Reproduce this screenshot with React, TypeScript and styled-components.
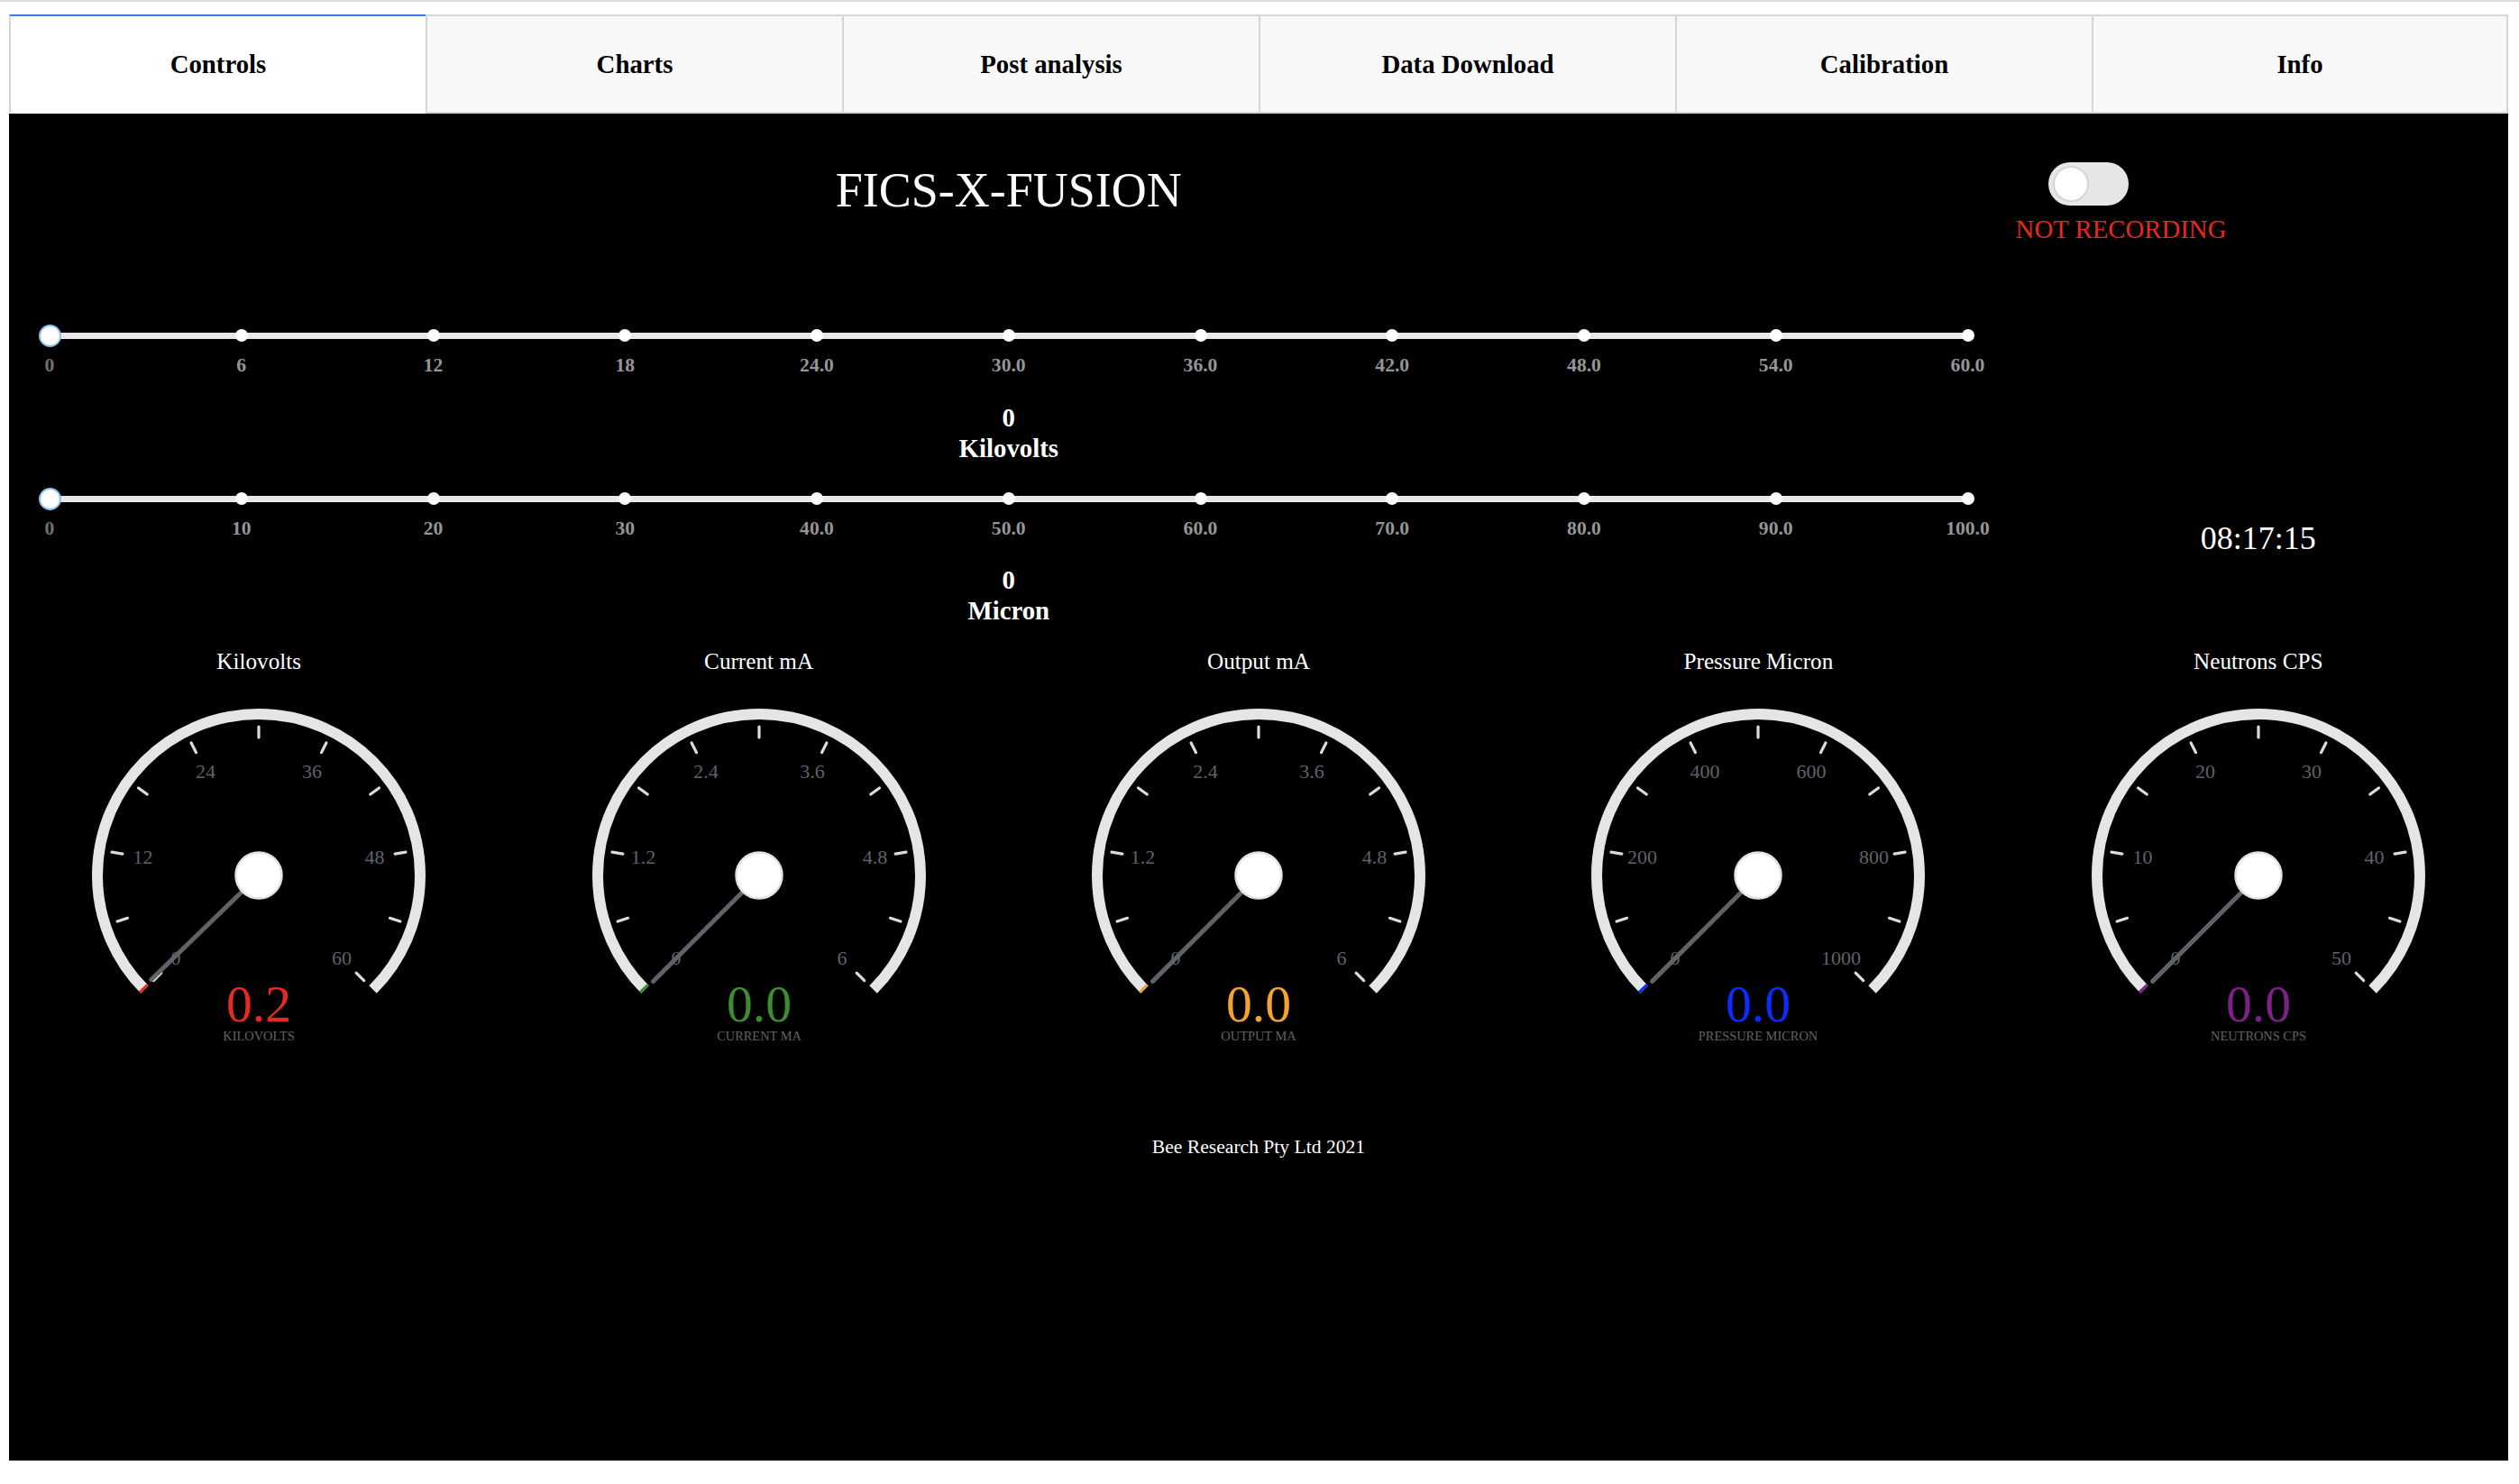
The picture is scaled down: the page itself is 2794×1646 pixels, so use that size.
import React from "react";
import styled, { createGlobalStyle } from "styled-components";

const GlobalStyle = createGlobalStyle`
  html, body { margin: 0; padding: 0; background: #ffffff; }
  body { font-family: "Liberation Serif", "Times New Roman", serif; }
  * { box-sizing: border-box; }
`;

const Page = styled.div`
  min-height: 100vh;
  display: flex;
  flex-direction: column;
  border-top: 2px solid #dcdcdc;
  padding: 14px 12px 26px 10px;
`;

const TabBar = styled.nav`
  display: grid;
  grid-template-columns: repeat(6, 1fr);
  height: 110px;
`;

const Tab = styled.div<{ $active?: boolean; $last?: boolean }>`
  display: flex;
  align-items: center;
  justify-content: center;
  font-size: 28.8px;
  font-weight: bold;
  color: #000;
  background: ${(p) => (p.$active ? "#ffffff" : "#f8f8f8")};
  border-left: 2px solid #d6d6d6;
  border-right: ${(p) => (p.$last ? "2px solid #d6d6d6" : "none")};
  border-top: 2px solid ${(p) => (p.$active ? "#3b78e7" : "#d6d6d6")};
  border-bottom: 2px solid ${(p) => (p.$active ? "#ffffff" : "#d6d6d6")};
`;

const Panel = styled.main`
  flex: 1;
  background: #000;
  display: flex;
  flex-direction: column;
`;

const TopSection = styled.section`
  display: grid;
  grid-template-columns: 80% 20%;
`;

const LeftColumn = styled.div`
  display: flex;
  flex-direction: column;
`;

const Title = styled.h1`
  margin: 58px 0 0;
  font-size: 54px;
  font-weight: normal;
  line-height: 54px;
  color: #fff;
  text-align: center;
`;

const SliderBlock = styled.div<{ $gap: number }>`
  margin-top: ${(p) => p.$gap}px;
  padding: 0 45px;
`;

const TrackRow = styled.div`
  padding: 11.5px 0;
`;

const Track = styled.div`
  position: relative;
  height: 7px;
  border-radius: 4px;
  background: #e8e8e8;
  display: flex;
  justify-content: space-between;
  align-items: center;
`;

const Dot = styled.span`
  width: 0;
  height: 0;
  display: flex;
  justify-content: center;
  align-items: center;
  &::before {
    content: "";
    flex: none;
    width: 14px;
    height: 14px;
    border-radius: 50%;
    background: #ffffff;
  }
`;

const Thumb = styled.span`
  position: absolute;
  left: -12.5px;
  top: 50%;
  width: 25px;
  height: 25px;
  margin-top: -12.5px;
  border-radius: 50%;
  background: #ffffff;
  border: 2px solid #8cc2ec;
`;

const MarkLabels = styled.div`
  margin-top: 7px;
  display: flex;
  justify-content: space-between;
  font-size: 21.6px;
  line-height: 22px;
  font-weight: bold;
`;

const MarkLabel = styled.span<{ $first?: boolean }>`
  width: 0;
  display: flex;
  justify-content: center;
  white-space: nowrap;
  color: ${(p) => (p.$first ? "#707070" : "#959595")};
`;

const SliderValue = styled.div<{ $gap?: number }>`
  margin-top: ${(p) => p.$gap ?? 0}px;
  font-size: 28.8px;
  line-height: 34px;
  font-weight: bold;
  color: #fff;
  text-align: center;
`;

const RightColumn = styled.div`
  display: flex;
  flex-direction: column;
  align-items: flex-start;
`;

const Switch = styled.div`
  margin: 54px 0 0 44px;
  width: 89px;
  height: 48px;
  border-radius: 24px;
  background: #e6e6e6;
  padding: 4px 5px;
`;

const Knob = styled.div`
  width: 40px;
  height: 40px;
  border-radius: 50%;
  background: #ffffff;
  border: 2px solid #d4d4d4;
`;

const Status = styled.div`
  margin: 10px 0 0 8px;
  font-size: 28.8px;
  line-height: 33px;
  color: #e8281e;
`;

const Clock = styled.div`
  align-self: stretch;
  margin-top: 306px;
  font-size: 36px;
  line-height: 41px;
  color: #fff;
  text-align: center;
`;

const GaugeRow = styled.section`
  margin-top: 25px;
  display: grid;
  grid-template-columns: repeat(5, 1fr);
`;

const GaugeCell = styled.div`
  display: flex;
  flex-direction: column;
  align-items: center;
`;

const GaugeTitle = styled.div`
  font-size: 25.2px;
  line-height: 29px;
  color: #fff;
`;

const GaugeSvg = styled.svg`
  margin-top: 33px;
  display: block;
  overflow: visible;
`;

const Footer = styled.footer`
  margin-top: 89px;
  font-size: 21.6px;
  line-height: 25px;
  color: #fff;
  text-align: center;
`;

const tabs = ["Controls", "Charts", "Post analysis", "Data Download", "Calibration", "Info"];

type SliderSpec = { marks: string[]; value: string; name: string };

const sliders: SliderSpec[] = [
  {
    marks: ["0", "6", "12", "18", "24.0", "30.0", "36.0", "42.0", "48.0", "54.0", "60.0"],
    value: "0",
    name: "Kilovolts",
  },
  {
    marks: ["0", "10", "20", "30", "40.0", "50.0", "60.0", "70.0", "80.0", "90.0", "100.0"],
    value: "0",
    name: "Micron",
  },
];

type GaugeSpec = {
  title: string;
  unit: string;
  max: number;
  labels: string[];
  value: number;
  color: string;
};

const gauges: GaugeSpec[] = [
  { title: "Kilovolts", unit: "KILOVOLTS", max: 60, labels: ["0", "12", "24", "36", "48", "60"], value: 0.2, color: "#e32b22" },
  { title: "Current mA", unit: "CURRENT MA", max: 6, labels: ["0", "1.2", "2.4", "3.6", "4.8", "6"], value: 0, color: "#3c8d2f" },
  { title: "Output mA", unit: "OUTPUT MA", max: 6, labels: ["0", "1.2", "2.4", "3.6", "4.8", "6"], value: 0, color: "#f4a330" },
  { title: "Pressure Micron", unit: "PRESSURE MICRON", max: 1000, labels: ["0", "200", "400", "600", "800", "1000"], value: 0, color: "#0b2bff" },
  { title: "Neutrons CPS", unit: "NEUTRONS CPS", max: 50, labels: ["0", "10", "20", "30", "40", "50"], value: 0, color: "#7b2188" },
];

const W = 380;
const H = 390;
const CX = 190;
const CY = 190;

const polar = (r: number, deg: number): [number, number] => {
  const rad = (deg * Math.PI) / 180;
  return [CX + r * Math.sin(rad), CY - r * Math.cos(rad)];
};

const arcPath = (r: number, a0: number, a1: number) => {
  const [x0, y0] = polar(r, a0);
  const [x1, y1] = polar(r, a1);
  const large = a1 - a0 > 180 ? 1 : 0;
  return `M ${x0} ${y0} A ${r} ${r} 0 ${large} 1 ${x1} ${y1}`;
};

function Gauge({ g }: { g: GaugeSpec }) {
  const start = -135;
  const sweep = 270;
  const valAngle = start + (g.value / g.max) * sweep;
  const fillEnd = Math.max(valAngle, start + 1);
  const ticks = Array.from({ length: 11 }, (_, i) => start + (i * sweep) / 10);
  const [nx, ny] = polar(166, valAngle);
  return (
    <GaugeCell>
      <GaugeTitle>{g.title}</GaugeTitle>
      <GaugeSvg width={W} height={H} viewBox={`0 0 ${W} ${H}`}>
        <path d={arcPath(179, start, 135)} fill="none" stroke="#e5e5e5" strokeWidth={12} />
        <path d={arcPath(179, start, fillEnd)} fill="none" stroke={g.color} strokeWidth={12} />
        {ticks.map((a, i) => {
          const [x0, y0] = polar(153, a);
          const [x1, y1] = polar(165, a);
          return (
            <line key={i} x1={x0} y1={y0} x2={x1} y2={y1} stroke="#dcdcdc" strokeWidth={3.2} strokeLinecap="round" />
          );
        })}
        {g.labels.map((l, i) => {
          const [x, y] = polar(130, start + i * 54);
          return (
            <text
              key={l + i}
              x={x}
              y={y + 7.5}
              textAnchor="middle"
              fontSize={22}
              fill="#5f6368"
              fontFamily='"Liberation Serif", serif'
            >
              {l}
            </text>
          );
        })}
        <line x1={CX} y1={CY} x2={nx} y2={ny} stroke="#5f6368" strokeWidth={5} strokeLinecap="round" />
        <circle cx={CX} cy={CY} r={25.5} fill="#ffffff" stroke="#e2e2e2" strokeWidth={2.5} />
        <text
          x={CX}
          y={CY + 162}
          textAnchor="middle"
          fontSize={57.6}
          fill={g.color}
          fontFamily='"Liberation Serif", serif'
        >
          {g.value.toFixed(1)}
        </text>
        <text
          x={CX}
          y={CY + 183}
          textAnchor="middle"
          fontSize={14.4}
          fill="#5f6368"
          fontFamily='"Liberation Serif", serif'
        >
          {g.unit}
        </text>
      </GaugeSvg>
    </GaugeCell>
  );
}

function Slider({ s, gap, valueGap }: { s: SliderSpec; gap: number; valueGap: number }) {
  return (
    <>
      <SliderBlock $gap={gap}>
        <TrackRow>
          <Track>
            {s.marks.map((m) => (
              <Dot key={m} />
            ))}
            <Thumb />
          </Track>
        </TrackRow>
        <MarkLabels>
          {s.marks.map((m, i) => (
            <MarkLabel key={m} $first={i === 0}>
              {m}
            </MarkLabel>
          ))}
        </MarkLabels>
      </SliderBlock>
      <SliderValue $gap={valueGap}>{s.value}</SliderValue>
      <SliderValue>{s.name}</SliderValue>
    </>
  );
}

export default function App() {
  return (
    <>
      <GlobalStyle />
      <Page>
        <TabBar>
          {tabs.map((t, i) => (
            <Tab key={t} $active={i === 0} $last={i === tabs.length - 1}>
              {t}
            </Tab>
          ))}
        </TabBar>
        <Panel>
          <TopSection>
            <LeftColumn>
              <Title>FICS-X-FUSION</Title>
              <Slider s={sliders[0]} gap={119} valueGap={30} />
              <Slider s={sliders[1]} gap={24} valueGap={29} />
            </LeftColumn>
            <RightColumn>
              <Switch>
                <Knob />
              </Switch>
              <Status>NOT RECORDING</Status>
              <Clock>08:17:15</Clock>
            </RightColumn>
          </TopSection>
          <GaugeRow>
            {gauges.map((g) => (
              <Gauge key={g.title} g={g} />
            ))}
          </GaugeRow>
          <Footer>Bee Research Pty Ltd 2021</Footer>
        </Panel>
      </Page>
    </>
  );
}
